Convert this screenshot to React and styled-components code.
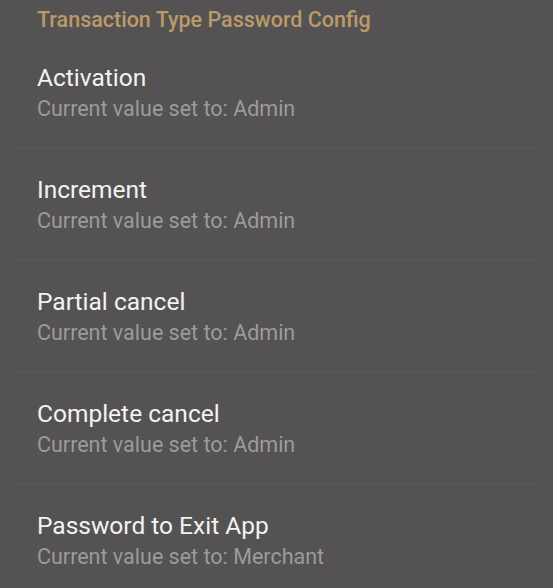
import React from "react";
import styled, { createGlobalStyle } from "styled-components";

const GlobalStyle = createGlobalStyle`
  html, body {
    margin: 0;
    padding: 0;
    background: #545253;
  }
  body {
    font-family: Roboto, "Noto Sans", "Liberation Sans", sans-serif;
    -webkit-font-smoothing: antialiased;
  }
`;

const Screen = styled.div`
  width: 553px;
  min-height: 588px;
  background: #545253;
  display: flex;
  flex-direction: column;
`;

const Header = styled.div`
  height: 36px;
  box-sizing: border-box;
  padding: 6px 0 0 37px;
  font-size: 21.5px;
  line-height: 28px;
  font-weight: 500;
  color: #bb9a6a;
`;

const Item = styled.div`
  margin: 0 12px;
  padding: 27px 0 25px 25px;
  border-bottom: ${(p) => (p.$last ? "none" : "1px solid #5d5b5c")};
  display: flex;
  flex-direction: column;
  gap: 3px;
`;

const Title = styled.div`
  font-size: 24.5px;
  line-height: 30px;
  color: #f2f2f2;
`;

const Subtitle = styled.div`
  font-size: 21.5px;
  line-height: 26px;
  color: #9c9b9b;
`;

const items = [
  { title: "Activation", value: "Admin" },
  { title: "Increment", value: "Admin" },
  { title: "Partial cancel", value: "Admin" },
  { title: "Complete cancel", value: "Admin" },
  { title: "Password to Exit App", value: "Merchant" },
];

export default function App() {
  return (
    <>
      <GlobalStyle />
      <Screen>
        <Header>Transaction Type Password Config</Header>
        {items.map((it, i) => (
          <Item key={it.title} $last={i === items.length - 1}>
            <Title>{it.title}</Title>
            <Subtitle>Current value set to: {it.value}</Subtitle>
          </Item>
        ))}
      </Screen>
    </>
  );
}
